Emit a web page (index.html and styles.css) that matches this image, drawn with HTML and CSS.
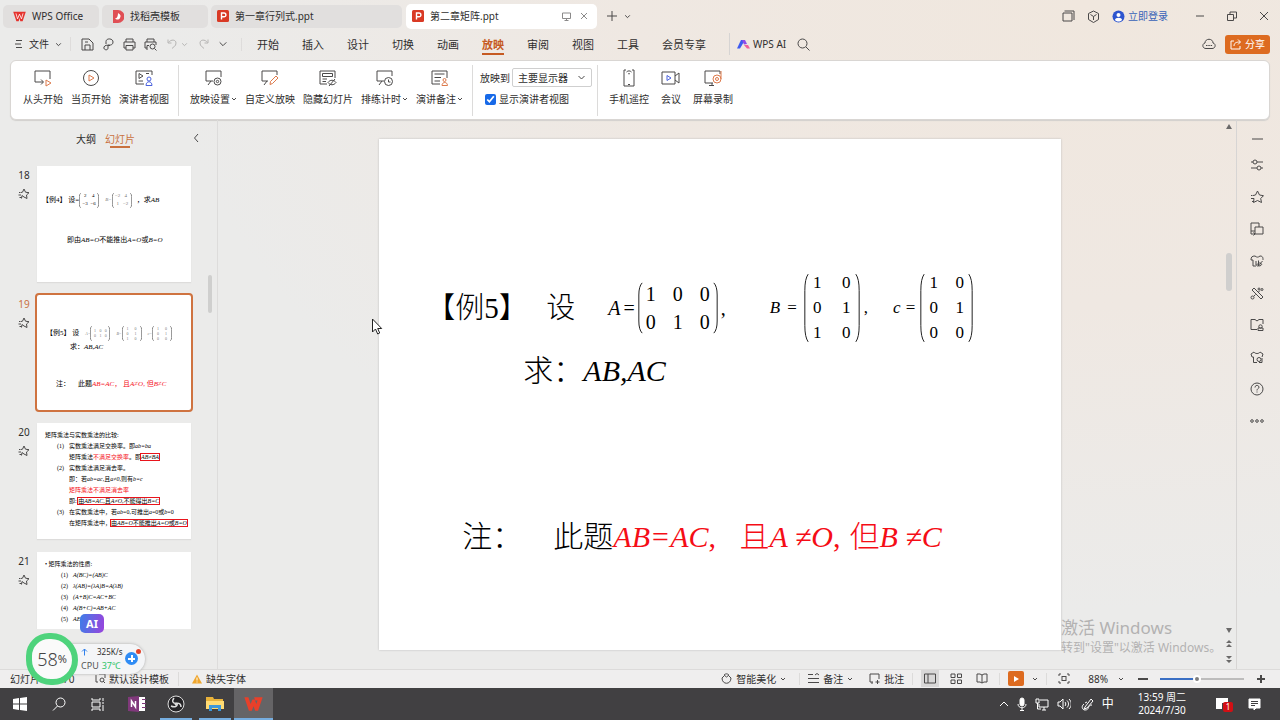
FILE: index.html
```html
<!DOCTYPE html>
<html lang="zh-CN">
<head>
    <title>第二章矩阵.ppt - WPS Office</title>
    <meta charset="UTF-8">
    <meta name="viewport" content="width=device-width, initial-scale=1.0">
    <link rel="stylesheet" href="styles.css">
</head>
<body>
    <!-- shared icons -->
    <svg class="defs">
        <symbol id="down" viewBox="0 0 6 6"><path d="M1 2l2 2 2-2" vector-effect="non-scaling-stroke"/></symbol>
        <symbol id="star" viewBox="0 0 12 12"><path d="M3.500 10.500l.5-3L6 9l3 1.500-.5-3.500L11 4.700l-3.500-.5L6 1 4.500 4.200 3 4.500M1 4.500h1.500M.5 7H3M1.500 9.500h2"/></symbol>
        <symbol id="wps" viewBox="0 0 16 14"><path fill="#e5322d" d="M0 1h16l-4 12H9L8 9l-1 4H4z"/><path fill="none" stroke="#fff" d="M3.500 3l2 7L8 4l2.500 6 2-7"/></symbol>
        <symbol id="wps-solid" viewBox="0 0 16 14"><path fill="#e8402a" d="M0 1h3.500l2 6L7 3h2l1.500 4 1-3H9.500l-1-3H16l-4 12H9.500L8 9l-1.500 4H4z"/></symbol>
        <symbol id="ppt" viewBox="0 0 12 12"><rect width="12" height="12" rx="1.500" fill="#d93a25"/><path fill="none" stroke="#fff" stroke-width="1.400" d="M4.500 9.500V3H7a1.800 1.800 0 010 3.800H4.500"/></symbol>
        <symbol id="paren" viewBox="0 0 6 60" preserveAspectRatio="none"><path d="M5 1Q1 5 1 15V45Q1 55 5 59" vector-effect="non-scaling-stroke"/></symbol>
    </svg>

    <header class="titlebar">
        <button class="tab home"><svg class="logo" width="13" height="11"><use href="#wps"/></svg>WPS Office</button>
        <button class="tab docer">
            <svg class="logo" width="12" height="13" viewBox="0 0 12 13"><path fill="#e04f55" d="M1 0h5a6 6 0 010 13H1z"/><path fill="#fff" d="M6 3c3 2 3 3 2 5s-4 2-5 0c2 1 3-2 3-5z"/></svg>找稻壳模板</button>
        <button class="tab doc"><svg class="logo" width="12" height="12"><use href="#ppt"/></svg>第一章行列式.ppt</button>
        <button class="tab doc active">
            <svg class="logo" width="12" height="12"><use href="#ppt"/></svg><span>第二章矩阵.ppt</span>
            <svg class="grey" width="9" height="9" viewBox="0 0 9 9"><path d="M.5 1h8v5.500h-8zM4.500 6.500v2M2.500 8.500h4"/></svg>
            <svg class="grey" width="8" height="8" viewBox="0 0 8 8"><path d="M1 1l6 6M7 1L1 7"/></svg>
        </button>
        <button class="plain add" aria-label="新建"><svg width="12" height="12" viewBox="0 0 12 12"><path d="M6 1v10M1 6h10"/></svg></button>
        <button class="plain" aria-label="标签列表"><svg width="7" height="7"><use href="#down"/></svg></button>
        <div class="window-tools">
            <button class="plain" aria-label="切换"><svg width="13" height="12" viewBox="0 0 13 12"><path d="M1 3h9v8H1zM2.500 1H12v9"/></svg></button>
            <button class="plain" aria-label="应用"><svg width="13" height="13" viewBox="0 0 13 13"><path d="M6.500 1l5 2.500v6l-5 3-5-3v-6zM3.500 4.500l3 2 3-2M6.500 6.500v3.500"/></svg></button>
            <a href="#" class="login"><svg width="13" height="13" viewBox="0 0 13 13"><circle cx="6.500" cy="6.500" r="6" fill="#2d55cf" stroke="none"/><circle cx="6.500" cy="5" r="2" fill="#fff" stroke="none"/><path fill="#fff" stroke="none" d="M3 10c0-3 7-3 7 0-2 2-5 2-7 0z"/></svg>立即登录</a>
            <button class="plain win" aria-label="最小化"><svg width="10" height="10" viewBox="0 0 10 10"><path d="M1 5h8"/></svg></button>
            <button class="plain win" aria-label="还原"><svg width="10" height="10" viewBox="0 0 10 10"><path d="M.5 3.500h6v6h-6zM3 3.500V1h6.500v6h-3"/></svg></button>
            <button class="plain win" aria-label="关闭"><svg width="10" height="10" viewBox="0 0 10 10"><path d="M1 1l8 8M9 1L1 9"/></svg></button>
        </div>
    </header>

    <nav class="menubar">
        <button class="plain file"><svg width="8" height="10" viewBox="0 0 8 10"><path d="M1 1.500h6M0 5h6M1 8.500h6"/></svg>文件<svg width="7" height="7"><use href="#down"/></svg></button>
        <div class="quick">
            <button class="plain" aria-label="保存"><svg width="13" height="13" viewBox="0 0 13 13"><path d="M1 1h7l4 4v7H1zM4 12V7h5v5M4 4h3"/></svg></button>
            <button class="plain" aria-label="输出"><svg width="13" height="13" viewBox="0 0 13 13"><path d="M4 6V3.500C4 0 11 0 11 4S6 7 6 7v3c0 3-5 2-4-1 1-2 3-2 6-1.500"/></svg></button>
            <button class="plain" aria-label="打印"><svg width="13" height="13" viewBox="0 0 13 13"><path d="M3 4V1h7v3M3 10H1V4h11v6h-2M3 7.500h7V12H3z"/></svg></button>
            <button class="plain" aria-label="打印预览"><svg width="13" height="13" viewBox="0 0 13 13"><path d="M3 4V1h7v3M3 10H1V4h11v3M3 12V7.500h2M10.500 10.500L12.500 12.500"/><circle cx="8.500" cy="8.500" r="2.500"/></svg></button>
            <button class="plain pale" aria-label="撤销"><svg width="12" height="12" viewBox="0 0 12 12"><path d="M1 1.500v3.500h3.500M1.500 4.500C4 1 9 1.500 9 5S6 9 5 10.500"/></svg><svg width="7" height="7"><use href="#down"/></svg></button>
            <button class="plain pale" aria-label="恢复"><svg width="12" height="12" viewBox="0 0 12 12"><path d="M10 1.500v3.500H6.500M9.500 4.500C7 1 2 1.500 2 5s3 4 4 5.500"/></svg></button>
            <button class="plain" aria-label="更多"><svg width="10" height="10"><use href="#down"/></svg></button>
        </div>
        <div class="menus">
            <button class="menu">开始</button>
            <button class="menu">插入</button>
            <button class="menu">设计</button>
            <button class="menu">切换</button>
            <button class="menu">动画</button>
            <button class="menu current">放映</button>
            <button class="menu">审阅</button>
            <button class="menu">视图</button>
            <button class="menu">工具</button>
            <button class="menu">会员专享</button>
        </div>
        <button class="plain ai"><svg width="13" height="10" viewBox="0 0 13 10"><path fill="#3f5bf0" stroke="none" d="M4 1h4L3 9.500H0z"/><path fill="#8d4be8" stroke="none" d="M5 1h3l2 4-3 .500z"/><path fill="#f0609a" stroke="none" d="M7 6h4l2 3.500h-3z"/></svg>WPS AI</button>
        <button class="plain" aria-label="搜索"><svg width="13" height="13" viewBox="0 0 13 13"><circle cx="5.500" cy="5.500" r="4.500"/><path d="M9 9l3.500 3.500"/></svg></button>
        <button class="plain cloud" aria-label="云同步"><svg width="14" height="12" viewBox="0 0 14 12"><path d="M4 10.500c-4 0-4-5-1-5.500 0-5 8-5 8 0 3 .5 3 5.500-1 5.500zM4 7.500h1.500M6.300 7.500h1.500M8.600 7.500h1.500"/></svg></button>
        <button class="share"><svg width="12" height="11" viewBox="0 0 12 11"><path d="M4 2H1v8h9V7M4 7c0-3 2-4 6-4M8 .5L10.500 3 8 5.500"/></svg>分享</button>
    </nav>

    <section class="ribbon">
        <button class="tool"><svg width="20" height="18" viewBox="0 0 20 18"><path d="M2 13V2h15v8M2 13h8M8 10.500l2.500 2.500L8 15.500"/><path class="orange" d="M13 11l5 3-5 3z"/></svg><span>从头开始</span></button>
        <button class="tool"><svg width="20" height="18" viewBox="0 0 20 18"><circle cx="10" cy="9" r="7.500"/><path class="orange" d="M8 6l5 3-5 3z"/></svg><span>当页开始</span></button>
        <button class="tool"><svg width="20" height="18" viewBox="0 0 20 18"><path d="M10 15H2V2h16v4M5 4.500l4 2.500-4 2.500zM4.500 12H9M12 4.500h3"/><path class="blue" d="M12 16.500c0-5 6-5 6 0z"/><circle class="blue" cx="15" cy="10" r="2"/></svg><span>演讲者视图</span></button>
        <i class="rule"></i>
        <button class="tool"><svg width="20" height="18" viewBox="0 0 20 18"><path d="M9 12H2V2h15v6M4 16l3-4"/><circle cx="13.500" cy="12.500" r="3.500"/><circle cx="13.500" cy="12.500" r="1.200"/></svg><span>放映设置<svg width="6" height="6"><use href="#down"/></svg></span></button>
        <button class="tool"><svg width="20" height="18" viewBox="0 0 20 18"><path d="M8 12H2V2h15v4M4 16l3-4"/><path class="orange" d="M10 15.500l.5-3L16 7l2 2-5.500 5.500z"/></svg><span>自定义放映</span></button>
        <button class="tool"><svg width="20" height="18" viewBox="0 0 20 18"><path d="M9 15H2V2h15v7M4.500 4.500h10v3h-10zM4.500 10H9M4.500 12.500H8M10 13.500c2-3 6-3 8 0-2 3-6 3-8 0zM11 17l6-7"/></svg><span>隐藏幻灯片</span></button>
        <button class="tool"><svg width="20" height="18" viewBox="0 0 20 18"><path d="M9 12H2V2h15v5M4 16l3-4M13.500 10.500v2.500h2"/><circle cx="13.500" cy="12.500" r="4"/></svg><span>排练计时<svg width="6" height="6"><use href="#down"/></svg></span></button>
        <button class="tool"><svg width="20" height="18" viewBox="0 0 20 18"><path d="M10 15H2V2h15v7M4.500 5h10M4.500 8.500H11M4.500 12H10"/><circle class="orange" cx="14.500" cy="11" r="1.500"/><path class="orange" d="M12 16.500c0-4 5.500-4 5.500 0z"/></svg><span>演讲备注<svg width="6" height="6"><use href="#down"/></svg></span></button>
        <i class="rule"></i>
        <div class="display">
            <div class="display-row">
                <label for="screen">放映到</label>
                <span class="picker"><select id="screen"><option>主要显示器</option></select><svg width="9" height="9"><use href="#down"/></svg></span>
            </div>
            <label class="check"><input type="checkbox" checked>显示演讲者视图</label>
        </div>
        <i class="rule"></i>
        <button class="tool"><svg width="20" height="18" viewBox="0 0 20 18"><path d="M7 1H5v16h10V1h-2M9 15.500h2M7.500 3c1.500-1.500 3.500-1.500 5 0M9 5c.5-.5 1.500-.5 2 0"/></svg><span>手机遥控</span></button>
        <button class="tool"><svg width="20" height="18" viewBox="0 0 20 18"><path d="M1 3h13v12H1zM14 7l4-3v10l-4-3"/><path class="blue" d="M6 6.500l4 2.500-4 2.500z"/></svg><span>会议</span></button>
        <button class="tool"><svg width="20" height="18" viewBox="0 0 20 18"><path d="M10 14H2V2h15v3M6 16.500h5M9 14v2"/><circle class="orange" cx="14" cy="10" r="4"/><circle class="orange" cx="14" cy="10" r="1.500"/><path class="orange" d="M18 2v8"/></svg><span>屏幕录制</span></button>
    </section>

    <main class="workspace">
        <aside class="panel">
            <div class="panel-tabs">
                <button>大纲</button>
                <button class="current">幻灯片</button>
                <button class="collapse" aria-label="收起"><svg width="7" height="10" viewBox="0 0 7 10"><path d="M5 1L1.500 5 5 9"/></svg></button>
            </div>
            <div class="panel-body">
                <div class="thumbs">
                    <div class="thumb-row">
                        <div class="num">18<svg width="12" height="12"><use href="#star"/></svg></div>
                        <div class="thumb t18">
                            <div class="line">【例4】 设=<span class="matrix"><svg><use href="#paren"/></svg><span class="cells two"><b>2</b><b>4</b><b>−3</b><b>−6</b></span><svg class="close"><use href="#paren"/></svg></span>
                                <span class="matrix light"><i>B=</i><svg><use href="#paren"/></svg><span class="cells two"><b>−2</b><b>4</b><b>1</b><b>−2</b></span><svg class="close"><use href="#paren"/></svg></span><span class="after">，求<i>AB</i></span></div>
                            <div class="line">即由<i>AB=O</i>不能推出<i>A=O</i>或<i>B=O</i></div>
                        </div>
                    </div>
                    <div class="thumb-row selected">
                        <div class="num">19<svg width="12" height="12"><use href="#star"/></svg></div>
                        <div class="thumb t19">
                            <div class="line">【例5】 设
                                <span class="matrix light"><i>A=</i><svg><use href="#paren"/></svg><span class="cells three"><b>1</b><b>0</b><b>0</b><b>0</b><b>1</b><b>0</b></span><svg class="close"><use href="#paren"/></svg></span>
                                <span class="matrix light"><i>B=</i><svg><use href="#paren"/></svg><span class="cells two"><b>1</b><b>0</b><b>0</b><b>1</b><b>1</b><b>0</b></span><svg class="close"><use href="#paren"/></svg></span>
                                <span class="matrix light"><i>c=</i><svg><use href="#paren"/></svg><span class="cells two"><b>1</b><b>0</b><b>0</b><b>1</b><b>0</b><b>0</b></span><svg class="close"><use href="#paren"/></svg></span>
                            </div>
                            <div class="line ask">求：<i>AB,AC</i></div>
                            <div class="line note"><span>注：</span><span>此题<em><i>AB=AC</i>， 且<i>A≠O</i>, 但<i>B≠C</i></em></span></div>
                        </div>
                    </div>
                    <div class="thumb-row">
                        <div class="num">20<svg width="12" height="12"><use href="#star"/></svg></div>
                        <div class="thumb list t20">
                            <p>矩阵乘法与实数乘法的比较:</p>
                            <p class="item">(1)<span>实数乘法满足交换率。即<i>ab=ba</i></span></p>
                            <p class="sub">矩阵乘法<em>不满足交换率</em>。即<mark><i>AB≠BA</i></mark></p>
                            <p class="item">(2)<span>实数乘法满足消去率。</span></p>
                            <p class="sub">即：若<i>ab=ac,</i>且<i>a≠0,</i>则有<i>b=c</i></p>
                            <p class="sub"><em>矩阵乘法不满足消去率</em></p>
                            <p class="sub">即: <mark>由<i>AB=AC,</i>且<i>A≠O,</i>不能得出<i>B=C</i></mark></p>
                            <p class="item">(3)<span>在实数乘法中，若<i>ab</i>=0,可推出<i>a</i>=0或<i>b</i>=0</span></p>
                            <p class="sub">在矩阵乘法中，<mark>由<i>AB=O</i>不能推出<i>A=O</i>或<i>B=O</i></mark></p>
                        </div>
                    </div>
                    <div class="thumb-row">
                        <div class="num">21<svg width="12" height="12"><use href="#star"/></svg></div>
                        <div class="thumb list t21">
                            <p>• 矩阵乘法的性质:</p>
                            <p class="item">(1)<i>A(BC)=(AB)C</i></p>
                            <p class="item">(2)<i>λ(AB)=(λA)B=A(λB)</i></p>
                            <p class="item">(3)<i>(A+B)C=AC+BC</i></p>
                            <p class="item">(4)<i>A(B+C)=AB+AC</i></p>
                            <p class="item">(5)<i>AE</i></p>
                        </div>
                    </div>
                </div>
                <div class="panel-scroll"></div>
            </div>
        </aside>

        <section class="stage">
            <article class="slide">
                <div class="problem">
                    <span class="lead">【例5】</span><span>设</span>
                    <span class="matrix a"><i>A</i><span>=</span><svg><use href="#paren"/></svg><span class="cells three"><b>1</b><b>0</b><b>0</b><b>0</b><b>1</b><b>0</b></span><svg class="close"><use href="#paren"/></svg>,</span>
                    <span class="matrix b"><i>B</i><span class="eq">=</span><svg><use href="#paren"/></svg><span class="cells two"><b>1</b><b>0</b><b>0</b><b>1</b><b>1</b><b>0</b></span><svg class="close"><use href="#paren"/></svg>,</span>
                    <span class="matrix c"><i>c</i><span class="eq">=</span><svg><use href="#paren"/></svg><span class="cells two"><b>1</b><b>0</b><b>0</b><b>1</b><b>0</b><b>0</b></span><svg class="close"><use href="#paren"/></svg></span>
                </div>
                <div class="question">求：<i>AB,AC</i></div>
                <div class="remark"><span>注：</span><span>此题<em><i>AB=AC</i></em></span><em class="comma">,</em><em>且<i>A ≠O</i>,</em><em class="but">但<i>B ≠C</i></em></div>
            </article>
        </section>
        <div class="scrollbar">
            <svg width="6" height="5" viewBox="0 0 6 5"><path d="M3 0l3 5H0z"/></svg>
            <div class="scroll-thumb"></div>
            <svg width="6" height="5" viewBox="0 0 6 5"><path d="M3 5l3-5H0z"/></svg>
            <svg width="6" height="8" viewBox="0 0 6 8"><path d="M3 0l3 3H0zM3 4l3 3H0z"/></svg>
            <svg width="6" height="8" viewBox="0 0 6 8"><path d="M3 4L0 1h6zM3 8L0 5h6z"/></svg>
        </div>

        <aside class="rail">
            <button class="plain" aria-label="折叠"><svg width="14" height="14" viewBox="0 0 14 14"><path d="M2 7h11"/></svg></button>
            <button class="plain" aria-label="属性"><svg width="14" height="14" viewBox="0 0 14 14"><path d="M1 4h2M7 4h6M1 10h6M11 10h2"/><circle cx="5" cy="4" r="2"/><circle cx="9" cy="10" r="2"/></svg></button>
            <button class="plain" aria-label="动画"><svg width="14" height="14" viewBox="0 0 14 14"><path d="M4 8.500l-.5 4L7.500 10.500l4 2-.8-4L13.500 5.700l-4-.7L7.500 1 5.500 5 3 5.500M1 5.500h1.500M1 8.500h3M2 11.500h2"/></svg></button>
            <button class="plain" aria-label="切换"><svg width="14" height="14" viewBox="0 0 14 14"><path d="M5 9H1V1h8v4M5 5h8v7H5zM1 9v3h4M3.500 10.500L5 12l-1.500 1.500"/></svg></button>
            <button class="plain" aria-label="模板"><svg width="14" height="14" viewBox="0 0 14 14"><path d="M3 6v6h3M1 6c0-3 1-4 4-4 2 1.500 3 1.500 5 0 3 0 3 2 3 4M1 6h2M6 11V7M8.500 6.500V12c4 0 4-3 1-3-2 0-4 3-2 3 2 0 3-3 5-5"/></svg></button>
            <button class="plain" aria-label="美化"><svg width="14" height="14" viewBox="0 0 14 14"><path d="M2 4l2-2 9 9-2 2zM8.500 6L10 4.500M5.500 8.500L4 10"/><circle cx="2.500" cy="11.500" r="1.500"/><circle cx="9" cy="3" r="1"/><circle cx="12" cy="3.500" r="1"/></svg></button>
            <button class="plain" aria-label="素材"><svg width="14" height="14" viewBox="0 0 14 14"><path d="M7 3L5 1.500H1v10h6M7 3l2-1.500h4V6M8 12.500V10h5v2.500z"/><circle cx="10.500" cy="8.500" r="1.700"/></svg></button>
            <button class="plain" aria-label="换装"><svg width="14" height="14" viewBox="0 0 14 14"><path d="M4 2L1 4l1 3h1.500v5.500H7M4 2c1 2 5 2 6 0l3 2-1 3M9 12.500h3V8"/><circle cx="9" cy="9.500" r="2"/></svg></button>
            <button class="plain" aria-label="帮助"><svg width="14" height="14" viewBox="0 0 14 14"><circle cx="7" cy="7" r="6"/><path d="M5 5.500c0-3 4-2.500 4-.3C9 6.500 7 6.500 7 8.500M7 9.500v1"/></svg></button>
            <button class="plain" aria-label="更多"><svg width="14" height="14" viewBox="0 0 14 14"><circle cx="2" cy="7" r="1.300"/><circle cx="7" cy="7" r="1.300"/><circle cx="12" cy="7" r="1.300"/></svg></button>
        </aside>

        <div class="watermark"><p>激活 Windows</p><p class="small">转到"设置"以激活 Windows。</p></div>
    </main>

    <footer class="statusbar">
        <span class="pages">幻灯片 19 / 70</span>
        <button class="plain template"><svg width="11" height="11" viewBox="0 0 11 11"><path d="M3 9H1V2M4 1h6v4M10 10L8 8"/><circle cx="7" cy="7" r="2"/></svg>默认设计模板</button>
        <button class="plain missing"><svg width="10" height="10" viewBox="0 0 10 10"><path fill="#f0a62c" stroke="none" d="M5 .5l5 9H0z"/><path stroke="#fff" d="M5 3.500v3M5 7.500v1"/></svg>缺失字体</button>
        <div class="status-tools">
            <button class="plain beautify"><svg width="11" height="11" viewBox="0 0 11 11"><path d="M3 3L1 5c0 7 9 7 9 0L8 3M3 2c2-2 4-1 5 0L5.500 4z"/></svg>智能美化<svg width="6" height="6"><use href="#down"/></svg></button>
            <i class="rule"></i>
            <button class="plain"><svg width="11" height="11" viewBox="0 0 11 11"><path d="M0 1.500h5M7 2l2-1.500L11 2M0 5.500h11M0 9.500h11"/></svg>备注<svg width="6" height="6"><use href="#down"/></svg></button>
            <button class="plain note-btn"><svg width="11" height="11" viewBox="0 0 11 11"><path d="M4 9H1V1h9v5M3 11V9M8.500 7v4M6.500 9h4"/></svg>批注</button>
            <i class="rule"></i>
            <button class="plain view on" aria-label="普通视图"><svg width="12" height="11" viewBox="0 0 12 11"><path d="M.5 1h11v9H.5zM4 1v9"/></svg></button>
            <button class="plain view" aria-label="浏览"><svg width="12" height="11" viewBox="0 0 12 11"><path d="M1 1h4v3.500H1zM7.500 1h4v3.500h-4zM1 7h4v3.500H1zM7.500 7h4v3.500h-4z"/></svg></button>
            <button class="plain view" aria-label="阅读"><svg width="12" height="11" viewBox="0 0 12 11"><path d="M6 2L4 1H1v8h3l2 1 2-1h3V1H8zM6 2v8"/></svg></button>
            <i class="rule"></i>
            <button class="play" aria-label="放映"><svg width="8" height="8" viewBox="0 0 8 8"><path d="M2 1l5 3-5 3z"/></svg></button>
            <button class="plain" aria-label="放映选项"><svg width="6" height="6"><use href="#down"/></svg></button>
            <i class="rule"></i>
            <button class="plain fit" aria-label="适应窗口"><svg width="12" height="11" viewBox="0 0 12 11"><path d="M1 3V1h2M9 1h2v2M11 8v2H9M3 10H1V8"/><rect x="4" y="3.500" width="4" height="4"/></svg></button>
            <button class="plain percent">88%<svg width="6" height="6"><use href="#down"/></svg></button>
            <button class="plain zoom-btn" aria-label="缩小"><svg width="10" height="10" viewBox="0 0 10 10"><path d="M0 5h10"/></svg></button>
            <input type="range" min="0" max="100" value="43" aria-label="缩放">
            <button class="plain zoom-btn" aria-label="放大"><svg width="10" height="10" viewBox="0 0 10 10"><path d="M1 5h8M5 1v8"/></svg></button>
        </div>
    </footer>

    <footer class="taskbar">
        <button aria-label="开始"><svg width="14" height="14" viewBox="0 0 14 14"><path fill="#fff" d="M0 2l6-1v5.500H0zM7 1l7-1v6.500H7zM0 7.500h6V13l-6-1zM7 7.500h7V14l-7-1z"/></svg></button>
        <button aria-label="搜索"><svg width="14" height="14" viewBox="0 0 14 14"><g fill="none" stroke="#fff"><circle cx="8.500" cy="5.500" r="4.500"/><path d="M5.500 9L1 13.500"/></g></svg></button>
        <button aria-label="任务视图"><svg width="14" height="14" viewBox="0 0 14 14"><path fill="none" stroke="#fff" d="M1 1v2h8V1M1 5h8v5H1zM1 14v-2h8v2M12 1v3M12 8v6M11 6h2"/></svg></button>
        <button aria-label="OneNote"><svg width="18" height="16" viewBox="0 0 18 16"><path fill="#fff" d="M8 1h9v14H8z"/><path fill="#80397b" d="M0 1l11-1v16L0 15zM14 3h4v1h-4zM14 7h4v1h-4zM14 11h4v1h-4z"/><path fill="none" stroke="#fff" stroke-width="1.500" d="M3.500 11V5l4 6V5"/></svg></button>
        <button class="running" aria-label="OBS"><svg width="18" height="18" viewBox="0 0 18 18"><circle cx="9" cy="9" r="8" fill="#252427" stroke="#ddd"/><g fill="none" stroke="#ddd" stroke-width="1.500"><path d="M7 3c-3 4 0 6 3 5M14 12c0-4-4-5-6-2M4 11c4 2 7 0 6-3"/></g></svg></button>
        <button class="running" aria-label="文件资源管理器"><svg width="18" height="16" viewBox="0 0 18 16"><path fill="#e8b23a" d="M0 1h7l1 2h9v10H0z"/><path fill="#ffdb73" d="M0 5h18v8H0z"/><path fill="#3e97d8" d="M3 15V9h12v6h-3v-3H6v3z"/></svg></button>
        <button class="running front" aria-label="WPS"><svg width="19" height="16"><use href="#wps-solid"/></svg></button>
        <div class="tray">
            <svg width="10" height="8" viewBox="0 0 10 8"><path d="M1 6l4-4 4 4"/></svg>
            <svg width="10" height="14" viewBox="0 0 10 14"><rect x="3" y="1" width="4" height="8" rx="2" fill="#fff"/><path d="M1 7c0 5 8 5 8 0M5 11v2.500M3 13.500h4"/></svg>
            <svg width="14" height="13" viewBox="0 0 14 13"><path d="M5 2h8v7H4V6M7 12h4M9 9v3M1 1h3v4H1zM2.500 5v6H6"/></svg>
            <svg width="14" height="12" viewBox="0 0 14 12"><path d="M1 4h2l3-3v10L3 8H1zM8 4c1 1 1 3 0 4M10 2.500c2 2 2 5 0 7M12 1c3 3 3 7 0 10"/></svg>
            <svg class="pen" width="13" height="13" viewBox="0 0 13 13"><path d="M4 9l6-8 2 2-6 7-3 1zM3 6c-3 2-2 6 1 6 5 0 2-5 7-5M6 4L4 5"/></svg>
            <span class="ime">中</span>
            <time>13:59 周二<br>2024/7/30</time>
            <span class="notice"><svg width="13" height="12" viewBox="0 0 13 12"><path fill="#fff" stroke="none" d="M0 0h12v5H6v6H0z"/></svg><b>1</b></span>
            <svg class="action" width="13" height="13" viewBox="0 0 13 13"><path fill="#fff" d="M1 1h11v9H8l-2 2v-2H1z"/><path stroke="#414042" d="M3 3.500h7M3 5.500h7M3 7.500h4"/></svg>
        </div>
    </footer>

    <!-- floating speed widget -->
    <div class="widget">
        <div class="pill">
            <span class="net"><svg width="7" height="8" viewBox="0 0 7 8"><path d="M3.500 7.500V1M1 3.500L3.500 1 6 3.500"/></svg>325K/s</span>
            <span class="cpu">CPU <em>37℃</em></span>
            <span class="boost"></span>
        </div>
        <div class="ring"><strong>58</strong>%</div>
        <span class="ai-badge">AI</span>
    </div>
    <svg class="cursor" width="11" height="17" viewBox="0 0 11 17"><path d="M.5 1v13l3-3 2.200 5 2-1-2-4.500h4z"/></svg>
</body>
</html>
```

FILE: styles.css
```css
* {
    box-sizing: border-box;
}

body {
    margin: 0;
    height: 100vh;
    display: flex;
    flex-direction: column;
    overflow: hidden;
    position: relative;
    font-family: "Noto Sans", "Noto Sans CJK SC", sans-serif;
    font-size: 10px;
    line-height: 14px;
    color: #2f2e2e;
    background: radial-gradient(ellipse at 85% 0, #f0e7de 0, #efe8e2 30%, #ebebea 60%);
}

.defs {
    position: absolute;
    width: 0;
    height: 0;
}

svg {
    fill: none;
    stroke: #4a4949;
    flex: none;
}

button,
select {
    font: inherit;
    color: inherit;
    border: 0;
    padding: 0;
    background: none;
    white-space: nowrap;
}

p {
    margin: 0;
}

em {
    font-style: normal;
}

.logo {
    stroke: none;
}

.plain {
    display: flex;
    align-items: center;
    justify-content: center;
}

.rule {
    width: 1px;
    background: #dcdbda;
}

.orange {
    stroke: #dd7a4c;
}

.blue {
    stroke: #4b62dd;
}

/* title bar */

.titlebar {
    height: 32px;
    flex: none;
    display: flex;
    align-items: center;
    padding: 0 6px 0 3px;
    gap: 3px;
}

.tab {
    height: 23px;
    display: flex;
    align-items: center;
    gap: 6px;
    padding: 0 10px;
    border-radius: 5px;
    background: #e1dfde;
}

.home {
    width: 96px;
}

.docer {
    width: 106px;
}

.doc {
    width: 191px;
    padding: 0 6px;
}

.doc.active {
    height: 25px;
    margin-left: 1px;
    background: #fff;
}

.active span {
    flex: 1;
    text-align: left;
}

.grey {
    stroke: #8b8a8a;
    margin-right: 3px;
}

.add {
    margin: 0 3px 0 6px;
}

.window-tools {
    margin-left: auto;
    display: flex;
    align-items: center;
    gap: 12px;
}

.login {
    display: flex;
    align-items: center;
    gap: 3px;
    margin-right: 10px;
    color: #3762b8;
    text-decoration: none;
}

.win {
    width: 20px;
}

/* menu row */

.menubar {
    height: 28px;
    flex: none;
    display: flex;
    align-items: center;
    padding: 0 10px 4px 15px;
}

.file {
    width: 56px;
    gap: 6px;
    border-right: 1px solid #dedcdb;
    justify-content: flex-start;
}

.quick {
    width: 171px;
    display: flex;
    align-items: center;
    gap: 8px;
    padding-left: 10px;
    border-right: 1px solid #dedcdb;
}

.quick .pale {
    gap: 2px;
    margin-left: 2px;
}

.pale svg {
    stroke: #b6b5b4;
}

.menus {
    display: flex;
    gap: 23px;
    padding: 0 23px 0 15px;
    border-right: 1px solid #d6d4d3;
    font-size: 11px;
}

.menu {
    height: 22px;
    padding-top: 4px;
    border-bottom: 2px solid transparent;
}

.menu.current {
    color: #c65a22;
    font-weight: bold;
    border-color: #c65a22;
}

.ai {
    gap: 3px;
    margin: 0 11px 0 7px;
}

.cloud {
    margin: 0 9px 0 auto;
}

.share {
    width: 45px;
    height: 19px;
    display: flex;
    align-items: center;
    justify-content: center;
    gap: 3px;
    border-radius: 3px;
    color: #fff;
    background: #dd6b20;
}

.share svg {
    stroke: #fff;
}

/* ribbon */

.ribbon {
    flex: none;
    height: 60px;
    margin: 0 10px;
    padding: 0 8px;
    display: flex;
    background: #fff;
    border: 1px solid #d9d6d3;
    border-radius: 6px;
    box-shadow: 0 1px 1px #d2d0ce;
}

.tool {
    min-width: 36px;
    padding: 8px 4px 0;
    display: flex;
    flex-direction: column;
    align-items: center;
    gap: 5px;
}

.tool span {
    display: flex;
    align-items: center;
    gap: 1px;
}

.tool .orange,
.tool .blue {
    fill: #fff;
}

.ribbon .rule {
    margin: 4px 7px 3px 5px;
}

.display {
    width: 112px;
    padding-top: 7px;
    display: flex;
    flex-direction: column;
    gap: 5px;
}

.display-row {
    display: flex;
    align-items: center;
    gap: 2px;
}

.picker {
    width: 80px;
    height: 19px;
    display: flex;
    align-items: center;
    padding: 0 5px;
    border: 1px solid #cfcfcf;
    border-radius: 2px;
}

.picker select {
    flex: 1;
    appearance: none;
}

.check {
    display: flex;
    align-items: center;
    gap: 3px;
    padding-left: 5px;
}

.check input {
    width: 11px;
    height: 11px;
    margin: 0;
    accent-color: #1769e8;
}

/* work area */

.workspace {
    flex: 1;
    min-height: 0;
    display: flex;
    position: relative;
}

.panel {
    width: 218px;
    flex: none;
    display: flex;
    flex-direction: column;
    border-right: 1px solid #dddcdb;
}

.panel-tabs {
    height: 46px;
    display: flex;
    align-items: flex-start;
    gap: 9px;
    padding: 10px 17px 0 76px;
}

.panel-tabs button {
    height: 18px;
}

.panel-tabs .current {
    color: #c9713f;
    background: linear-gradient(#c9713f, #c9713f) center bottom / 20px 2px no-repeat;
}

.panel-tabs .collapse {
    margin-left: auto;
}

.panel-body {
    flex: 1;
    min-height: 0;
    display: flex;
    justify-content: space-between;
    padding-right: 5px;
    margin-bottom: 40px;
}

.thumbs {
    width: 194px;
    overflow: hidden;
    display: flex;
    flex-direction: column;
    gap: 13px;
}

.thumb-row {
    flex: none;
    display: flex;
    padding-right: 3px;
}

.num {
    width: 37px;
    padding: 2px 0 0 11px;
    display: flex;
    flex-direction: column;
    align-items: center;
    gap: 6px;
}

.selected .num {
    color: #c9713f;
}

.thumb {
    flex: 1;
    aspect-ratio: 4 / 3;
    overflow: hidden;
    background: #fff;
    color: #000;
    font-family: "Liberation Serif", "Noto Sans CJK SC", serif;
    font-size: 7px;
    line-height: 10px;
    white-space: nowrap;
    box-shadow: 0 1px 1px #dddcdb;
}

.selected .thumb {
    outline: 2px solid #cf7340;
    border-radius: 2px;
}

.thumb em,
.slide em {
    color: #f50d16;
}

.line {
    display: flex;
    align-items: center;
}

.matrix {
    display: flex;
    align-items: center;
}

.matrix svg {
    stroke: #222;
}

.matrix .close {
    transform: rotate(180deg);
}

.cells {
    display: grid;
    text-align: center;
}

.cells b {
    font-weight: normal;
}

.two {
    grid-template-columns: 1fr 1fr;
}

.three {
    grid-template-columns: 1fr 1fr 1fr;
}

.thumb .matrix {
    font-size: 5px;
    line-height: 8px;
}

.thumb .matrix svg {
    width: 2px;
    height: 15px;
    stroke: #888;
}

.thumb .cells {
    width: 16px;
}

.thumb .light {
    color: #777;
    margin-left: 6px;
}

.t18 {
    padding: 26px 0 0 5px;
}

.t18 .line + .line {
    padding: 27px 0 0 25px;
}

.after {
    padding-left: 5px;
}

.t19 {
    padding: 31px 0 0 9px;
}

.t19 .matrix {
    font-size: 4px;
    line-height: 5px;
}

.ask {
    padding: 1px 0 0 24px;
}

.note {
    gap: 8px;
    padding: 27px 0 0 10px;
}

.list {
    padding: 7px 0 0 8px;
    font-size: 6px;
    line-height: 11px;
}

.item {
    display: flex;
    gap: 5px;
    padding-left: 12px;
}

.sub {
    padding-left: 24px;
}

.list mark {
    color: inherit;
    background: none;
    outline: 1px solid #e8141c;
}

.t21 .item {
    padding-left: 16px;
}

.panel-scroll {
    width: 4px;
    height: 38px;
    margin-top: 109px;
    border-radius: 2px;
    background: #cfcfce;
}

.stage {
    flex: 1;
    min-width: 0;
    display: flex;
    justify-content: center;
    padding: 19px 0;
}

.slide {
    height: 100%;
    aspect-ratio: 4 / 3;
    padding: 133px 0 0 47px;
    background: #fff;
    color: #000;
    box-shadow: 0 0 2px #bbb;
    font-family: "Liberation Serif", "Noto Sans CJK SC", serif;
    font-size: 30px;
    font-weight: 300;
    line-height: 40px;
    white-space: nowrap;
}

.problem {
    height: 71px;
    display: flex;
    align-items: center;
    font-size: 29px;
}

.lead {
    width: 120px;
}

.slide .matrix svg {
    width: 5px;
    height: 70px;
}

.slide .a {
    margin-left: 33px;
    gap: 3px;
    font-size: 20px;
    line-height: 28px;
}

.slide .a svg {
    height: 52px;
}

.a .cells {
    width: 64px;
    column-gap: 17px;
}

.slide .b,
.slide .c {
    font-size: 17px;
    line-height: 25px;
    gap: 4px;
}

.slide .b {
    margin-left: 44px;
}

.b .eq {
    margin: 0 3px;
}

.b .cells {
    width: 38px;
    column-gap: 20px;
}

.slide .c {
    margin-left: 25px;
}

.c .eq {
    margin: 0 1px;
}

.c .cells {
    width: 35px;
    column-gap: 17px;
}

.question {
    padding: 8px 0 0 97px;
}

.remark {
    display: flex;
    padding: 126px 0 0 36px;
}

.remark span:first-child {
    width: 91px;
}

.comma {
    width: 31px;
}

.but {
    margin-left: 9px;
}

.scrollbar {
    width: 14px;
    flex: none;
    display: flex;
    flex-direction: column;
    align-items: center;
    gap: 7px;
    padding: 4px 0 6px;
}

.scrollbar svg {
    fill: #6a6969;
    stroke: none;
}

.scroll-thumb {
    width: 6px;
    height: 38px;
    margin: 117px 0 auto;
    border-radius: 3px;
    background: #d0cfce;
}

.rail {
    width: 44px;
    flex: none;
    display: flex;
    flex-direction: column;
    align-items: center;
    gap: 18px;
    padding: 12px 3px 0 0;
    border-left: 1px solid #d7d5d4;
}

.rail .plain:first-child {
    margin-bottom: -6px;
}

.watermark {
    position: absolute;
    right: 57px;
    bottom: 12px;
    color: #b3b2b2;
    font-size: 12px;
    line-height: 18px;
    width: 162px;
    white-space: nowrap;
}

.watermark p:first-child {
    font-size: 17px;
    line-height: 22px;
}

/* status bar */

.statusbar {
    height: 19px;
    flex: none;
    display: flex;
    align-items: center;
    padding: 0 14px 1px 10px;
    border-top: 1px solid #dcdbda;
    background: #efeeee;
}

.pages {
    width: 76px;
}

.template {
    width: 93px;
    gap: 3px;
    border-right: 1px solid #dcdbda;
}

.missing {
    gap: 4px;
    margin-left: 13px;
}

.status-tools {
    margin-left: auto;
    display: flex;
    align-items: center;
    gap: 8px;
}

.status-tools .plain {
    gap: 4px;
}

.statusbar .rule {
    height: 12px;
}

.beautify {
    margin-right: 5px;
}

.note-btn {
    margin-left: 8px;
}

.view {
    width: 18px;
    height: 17px;
}

.view.on {
    background: #d8d7d7;
}

.play {
    width: 16px;
    height: 15px;
    display: flex;
    align-items: center;
    justify-content: center;
    border-radius: 2px;
    background: #dd6b20;
}

.play svg {
    fill: #fff;
    stroke: none;
}

.fit {
    margin-left: 3px;
}

.status-tools .percent {
    gap: 10px;
    margin: 0 6px 0 10px;
}

.zoom-btn svg {
    stroke-width: 2;
}

.statusbar input {
    appearance: none;
    width: 84px;
    height: 2px;
    margin: 0 4px;
    background: linear-gradient(to right, #3a6fc4 43%, #bdbcbc 43%);
}

.statusbar input::-webkit-slider-thumb {
    appearance: none;
    width: 8px;
    height: 8px;
    border: 2px solid #fff;
    border-radius: 50%;
    background: #7d7c7c;
}

/* taskbar */

.taskbar {
    height: 32px;
    flex: none;
    display: flex;
    background: #414042;
    color: #fff;
}

.taskbar svg {
    stroke: none;
}

.taskbar button {
    width: 39px;
    display: flex;
    align-items: center;
    justify-content: center;
}

.running {
    background: linear-gradient(#76aee0, #76aee0) center bottom / 32px 2px no-repeat;
}

.taskbar .front {
    background: linear-gradient(#76aee0, #76aee0) center bottom / 39px 2px no-repeat #656466;
}

.tray {
    margin-left: auto;
    display: flex;
    align-items: center;
    gap: 8px;
    padding-right: 19px;
}

.taskbar .tray svg {
    stroke: #fff;
}

.tray .pen {
    margin-left: 2px;
}

.ime {
    font-size: 12px;
    margin-right: 16px;
}

time {
    text-align: center;
    line-height: 13px;
}

.notice {
    position: relative;
    margin: 0 11px 0 22px;
    display: flex;
}

.notice b {
    position: absolute;
    left: 7px;
    top: 4px;
    width: 10px;
    height: 10px;
    border-radius: 2px;
    background: #d20f14;
    font-size: 8px;
    line-height: 10px;
    text-align: center;
    font-weight: normal;
}

/* floating items */

.widget {
    position: absolute;
    left: 26px;
    bottom: 34px;
    width: 120px;
    height: 72px;
}

.pill {
    position: absolute;
    left: 26px;
    top: 30px;
    width: 93px;
    height: 30px;
    padding: 1px 0 0 29px;
    border-radius: 15px;
    background: #f4f5f7;
    box-shadow: 0 0 3px #aaa;
    font-size: 9px;
}

.pill span {
    display: flex;
    gap: 9px;
    height: 14px;
    align-items: center;
}

.pill .net {
    font-size: 8px;
}

.pill .cpu {
    gap: 3px;
    color: #555;
}

.cpu em {
    color: #2fc46a;
}

.net svg {
    stroke: #2f80ed;
}

.pill .boost {
    position: absolute;
    right: 7px;
    top: 8px;
    width: 13px;
    height: 13px;
    border-radius: 50%;
    background:
        linear-gradient(#fff, #fff) center / 7px 2px no-repeat,
        linear-gradient(#fff, #fff) center / 2px 7px no-repeat,
        #2f8cf5;
}

.boost::after {
    content: "";
    position: absolute;
    right: -3px;
    top: -3px;
    width: 5px;
    height: 5px;
    border-radius: 50%;
    background: #e2452d;
}

.ring {
    position: absolute;
    left: 0;
    top: 19px;
    width: 52px;
    height: 52px;
    display: flex;
    align-items: center;
    justify-content: center;
    border: 6px solid #4ed37c;
    border-radius: 46% 54% 50% 50%;
    background: #fafafa;
    font-size: 11px;
    color: #444;
}

.ring strong {
    font-size: 18px;
    font-weight: 300;
}

.ai-badge {
    position: absolute;
    left: 54px;
    top: 0;
    width: 24px;
    height: 19px;
    border-radius: 5px;
    background: linear-gradient(100deg, #3d7ee8, #9a43dc);
    color: #fff;
    font-size: 11px;
    line-height: 19px;
    font-weight: bold;
    text-align: center;
}

.cursor {
    position: absolute;
    left: 372px;
    top: 318px;
    fill: #fff;
    stroke: #222;
}
```
